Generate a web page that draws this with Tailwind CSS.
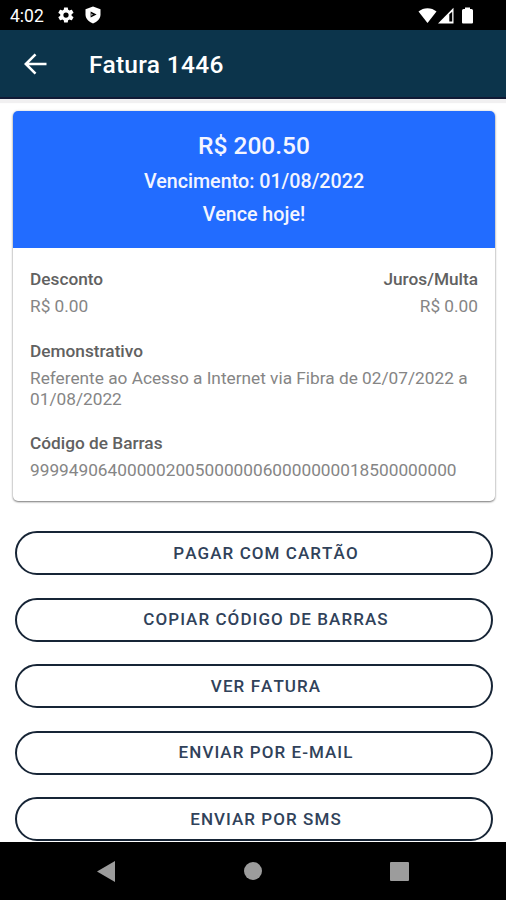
<!DOCTYPE html>
<html lang="pt-BR">
<head>
    <meta charset="UTF-8">
    <meta name="viewport" content="width=device-width, initial-scale=1.0">
    <title>Fatura 1446</title>
    <script src="https://cdn.jsdelivr.net/npm/@tailwindcss/browser@4"></script>
</head>
<body class="flex h-screen flex-col overflow-hidden bg-white font-['Roboto',sans-serif]">

    <!-- Status bar -->
    <div class="flex h-[30px] shrink-0 items-center bg-black pl-[10px] pr-[33px] text-white">
        <span class="w-[47px] pt-[3px] text-[17.500px] leading-none">4:02</span>
        <svg class="h-[18px] w-[18px]" viewBox="0 0 24 24" fill="currentColor">
            <path fill-rule="evenodd" d="M19.4 13c.1-.3.1-.7.1-1s0-.7-.1-1l2.400-1.700c.2-.2.2-.4.1-.6l-2.100-3.600c-.1-.2-.4-.3-.6-.2l-2.700 1.200c-.5-.4-1.100-.7-1.700-1l-.4-2.700c0-.2-.2-.4-.5-.4h-4c-.2 0-.4.2-.5.4l-.4 2.700c-.6.300-1.200.6-1.700 1l-2.700-1.200c-.2-.1-.5 0-.6.2l-2.100 3.600c-.1.2-.1.4.1.6l2.400 1.700c0 .3-.1.7-.1 1s0 .7.1 1l-2.400 1.700c-.2.2-.2.4-.1.6l2.100 3.600c.1.2.4.300.6.2l2.700-1.200c.5.4 1.100.7 1.700 1l.4 2.700c0 .2.2.4.5.4h4c.2 0 .4-.2.5-.4l.4-2.700c.6-.3 1.200-.6 1.700-1l2.700 1.200c.2.1.5 0 .6-.2l2.100-3.600c.1-.2.1-.4-.1-.6zM12 15.500a3.500 3.500 0 1 1 0-7 3.500 3.500 0 0 1 0 7z"/>
        </svg>
        <svg class="ml-[10px] h-[18px] w-4" viewBox="0 0 16 18">
            <path fill="currentColor" d="M8 .5l7.500 2.700v5.300c0 4-3.300 7.500-7.500 9-4.200-1.500-7.500-5-7.500-9V3.200z"/>
            <path fill="#000" d="M5.600 5.500l6 3-6 3z"/>
            <path fill="#999" d="M5.600 7.300l2.800 1.200-2.800 1.400z"/>
        </svg>
        <div class="ml-auto flex items-center">
            <svg class="h-[17px] w-[19px]" viewBox="0 0 19 17" fill="currentColor">
                <path d="M.5 4.600C5.500.1 13.500.1 18.500 4.600L9.500 16z"/>
            </svg>
            <svg class="h-[17px] w-[17px]" viewBox="0 0 17 17">
                <path fill="currentColor" d="M1 16.500L16.500.8v15.700z"/>
                <path fill="#000" d="M12.300 7.200l2.900-2.400v9.700h-2.900z"/>
            </svg>
            <svg class="ml-2 h-[17px] w-[11px]" viewBox="0 0 11 17" fill="currentColor">
                <path d="M3 .5h5v1.500h1.500Q11 2 11 3.500v12q0 1-1 1H1q-1 0-1-1v-12Q0 2 1.500 2H3z"/>
            </svg>
        </div>
    </div>

    <!-- App bar -->
    <header class="z-10 flex h-[69px] shrink-0 items-center border-b-2 border-[#111a35] bg-[#0c344b] pl-6 text-white shadow-[0_4px_1px_#f1f0f1]">
        <svg class="mt-px h-[22px] w-[23px]" viewBox="0 0 23 22" fill="none" stroke="currentColor" stroke-width="2.600">
            <path d="M22.500 11H2M11.500 1.300L1.800 11l9.700 9.700"/>
        </svg>
        <h1 class="ml-[42px] pt-[3px] text-[24.500px] font-medium tracking-[0.300px]">Fatura 1446</h1>
    </header>

    <main class="min-h-0 flex-1 overflow-hidden pl-[13px] pr-[11px] pt-3">
        <!-- Invoice card -->
        <section class="h-[390px] overflow-hidden rounded-[5px] bg-white shadow-[0_1px_2px_rgba(0,0,0,0.5),0_0_3px_rgba(0,0,0,0.12)]">
            <div class="h-[137px] bg-[#226cff] pt-[19px] text-center font-medium text-[#f4f5ff]">
                <p class="text-[24.500px] leading-8">R$ 200.50</p>
                <p class="mt-1 text-[19.700px] leading-8">Vencimento: 01/08/2022</p>
                <p class="mt-px text-[19.700px] leading-8">Vence hoje!</p>
            </div>
            <div class="px-[17px] pt-[21px] text-[17.250px] leading-[20.800px] text-[#858585]">
                <div class="flex justify-between">
                    <div>
                        <h2 class="font-medium text-[#616161]">Desconto</h2>
                        <p class="mt-1.5">R$ 0.00</p>
                    </div>
                    <div class="text-right">
                        <h2 class="font-medium text-[#616161]">Juros/Multa</h2>
                        <p class="mt-1.5">R$ 0.00</p>
                    </div>
                </div>
                <h2 class="mt-[24.500px] font-medium text-[#616161]">Demonstrativo</h2>
                <p class="mt-1.5 whitespace-nowrap">Referente ao Acesso a Internet via Fibra de 02/07/2022 a<br>01/08/2022</p>
                <h2 class="mt-[23.500px] font-medium text-[#616161]">Código de Barras</h2>
                <p class="mt-[6.500px]">99994906400000200500000060000000018500000000</p>
            </div>
        </section>

        <!-- Actions -->
        <div class="mt-[30px] flex flex-col gap-[22.500px] px-0.5 text-[17px] font-medium tracking-[1.070px] text-[#30425a] [font-kerning:none]">
            <button class="h-11 shrink-0 rounded-full border-2 border-[#172536] pl-6 pt-0.5">PAGAR COM CARTÃO</button>
            <button class="h-11 shrink-0 rounded-full border-2 border-[#172536] pl-6">COPIAR CÓDIGO DE BARRAS</button>
            <button class="h-11 shrink-0 rounded-full border-2 border-[#172536] pl-6 pt-0.5">VER FATURA</button>
            <button class="h-11 shrink-0 rounded-full border-2 border-[#172536] pl-6">ENVIAR POR E-MAIL</button>
            <button class="h-11 shrink-0 rounded-full border-2 border-[#172536] pl-6 pt-0.5">ENVIAR POR SMS</button>
        </div>
    </main>

    <!-- Android navigation bar -->
    <nav class="flex h-[58px] shrink-0 items-center justify-between bg-black px-[97px] text-[#9c9c9c]">
        <svg class="h-[21px] w-[18px]" viewBox="0 0 18 21" fill="currentColor"><path d="M18 0v21L0 10.500z"/></svg>
        <div class="h-[18px] w-[18px] rounded-full bg-[#9c9c9c]"></div>
        <div class="h-[19px] w-[19px] rounded-[1px] bg-[#9c9c9c]"></div>
    </nav>

</body>
</html>
